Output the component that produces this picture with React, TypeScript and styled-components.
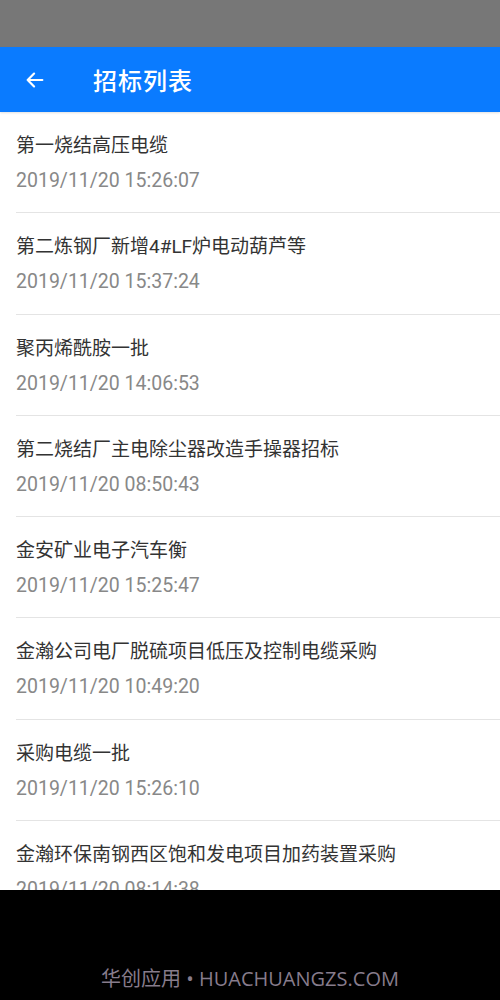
import * as React from "react";
import styled, { createGlobalStyle } from "styled-components";

const tenders = [
  { title: "第一烧结高压电缆", time: "2019/11/20 15:26:07" },
  { title: "第二炼钢厂新增4#LF炉电动葫芦等", time: "2019/11/20 15:37:24" },
  { title: "聚丙烯酰胺一批", time: "2019/11/20 14:06:53" },
  { title: "第二烧结厂主电除尘器改造手操器招标", time: "2019/11/20 08:50:43" },
  { title: "金安矿业电子汽车衡", time: "2019/11/20 15:25:47" },
  { title: "金瀚公司电厂脱硫项目低压及控制电缆采购", time: "2019/11/20 10:49:20" },
  { title: "采购电缆一批", time: "2019/11/20 15:26:10" },
  { title: "金瀚环保南钢西区饱和发电项目加药装置采购", time: "2019/11/20 08:14:38" },
];

const GlobalStyle = createGlobalStyle`
  html, body {
    margin: 0;
    padding: 0;
    background: #000;
  }
  body {
    font-family: Roboto, "Noto Sans CJK SC", sans-serif;
  }
`;

const Screen = styled.div`
  width: 500px;
  height: 1000px;
  display: flex;
  flex-direction: column;
  background: #fff;
`;

const StatusBar = styled.div`
  height: 47px;
  flex-shrink: 0;
  background: #777777;
`;

const Header = styled.header`
  height: 65px;
  flex-shrink: 0;
  display: flex;
  align-items: center;
  background: #0a7bff;
  color: #fff;
  box-shadow: 0 1px 2px rgba(0, 0, 0, 0.12);
  position: relative;
  z-index: 1;
`;

const BackButton = styled.div`
  width: 72px;
  padding-left: 24px;
  box-sizing: border-box;
  display: flex;
  align-items: center;
`;

const Title = styled.h1`
  margin: 0 0 0 21px;
  font-size: 24px;
  font-weight: 500;
  letter-spacing: 1px;
`;

const List = styled.ul`
  flex: 1;
  margin: 0;
  padding: 0 0 0 16px;
  list-style: none;
  overflow: hidden;
`;

const Row = styled.li`
  height: 101.3px;
  box-sizing: border-box;
  padding-top: 22px;
  border-bottom: 1px solid #e4e4e4;
`;

const RowTitle = styled.div`
  font-size: 19px;
  line-height: 24px;
  color: #333;
`;

const RowTime = styled.div`
  margin-top: 11px;
  font-size: 19.5px;
  line-height: 24px;
  color: #888;
`;

const Footer = styled.footer`
  height: 110px;
  flex-shrink: 0;
  background: #000;
  display: flex;
  align-items: flex-end;
  justify-content: center;
  padding-bottom: 8px;
  box-sizing: border-box;
`;

const Watermark = styled.span`
  font-family: "Open Sans", "Noto Sans CJK SC", sans-serif;
  font-size: 20px;
  color: #877c8c;
`;

const Back = () => (
  <svg width="22" height="22" viewBox="0 0 24 24" fill="none">
    <path
      d="M20 12H4M11 5l-7 7 7 7"
      stroke="#fff"
      strokeWidth="2.4"
      strokeLinecap="round"
      strokeLinejoin="round"
    />
  </svg>
);

const App = () => (
  <>
    <GlobalStyle />
    <Screen>
      <StatusBar />
      <Header>
        <BackButton>
          <Back />
        </BackButton>
        <Title>招标列表</Title>
      </Header>
      <List>
        {tenders.map(t => (
          <Row key={t.title}>
            <RowTitle>{t.title}</RowTitle>
            <RowTime>{t.time}</RowTime>
          </Row>
        ))}
      </List>
      <Footer>
        <Watermark>华创应用 • HUACHUANGZS.COM</Watermark>
      </Footer>
    </Screen>
  </>
);

export default App;
